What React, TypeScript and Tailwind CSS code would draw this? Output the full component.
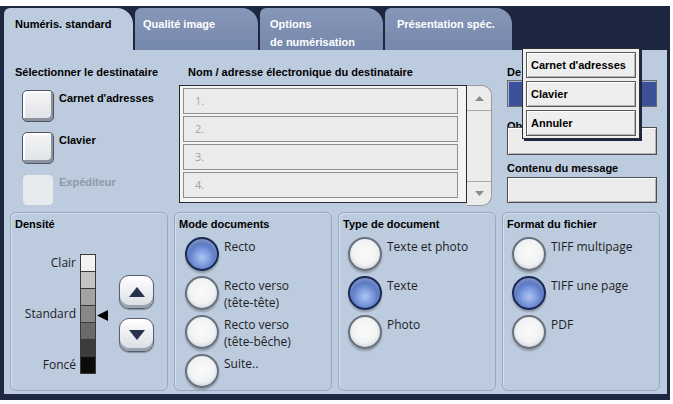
import type { ReactNode } from 'react';

function Radio({ on }: { on?: boolean }) {
  return (
    <div
      className={
        on
          ? 'w-[34px] h-[34px] shrink-0 rounded-full border-2 border-[#1c2b55] bg-[radial-gradient(circle_at_50%_62%,#aec4f4_0%,#7b98dc_35%,#4b69b5_68%,#2b4283_100%)] shadow-[inset_0_3px_3px_rgba(255,255,255,0.3),0_2px_2px_rgba(0,0,0,0.25)]'
          : 'w-[34px] h-[34px] shrink-0 rounded-full border-2 border-[#69717d] bg-[radial-gradient(circle_at_50%_45%,#fbfbfb_0%,#f1f2f3_55%,#cdd2d9_80%,#9aa1ac_100%)] shadow-[0_2px_2px_rgba(0,0,0,0.25)]'
      }
    />
  );
}

function Option({ on, children }: { on?: boolean; children: ReactNode }) {
  return (
    <div className="flex items-start gap-[5px] h-[34px]">
      <Radio on={on} />
      <div className="pt-[1px] leading-[17px] text-[12px] text-[#1e1e1e] font-['Open_Sans',sans-serif] whitespace-nowrap">
        {children}
      </div>
    </div>
  );
}

function Panel({ title, children }: { title: string; children: ReactNode }) {
  return (
    <div className="w-[158px] h-[179px] rounded-[6px] border border-[#97a9c2] shadow-[inset_1px_1px_0_#d3deeb] pt-[4px] px-[4px]">
      <div className="text-[11px] font-bold leading-[14px] text-black">{title}</div>
      {children}
    </div>
  );
}

function SelectButton({ label, disabled }: { label: string; disabled?: boolean }) {
  return (
    <div className="flex items-start gap-[5px]">
      <div
        className={
          disabled
            ? 'w-[32px] h-[32px] rounded-[5px] border border-[#c3cad4] bg-[#e7eaee]'
            : 'w-[32px] h-[32px] rounded-[5px] border border-[#4f5562] bg-[linear-gradient(#f4f5f6,#dfe2e6)] shadow-[inset_-2px_-3px_0_#8c929d,inset_2px_2px_0_#ffffff]'
        }
      />
      <div className={disabled ? 'pt-[1px] leading-[14px] text-[11px] font-bold text-[#8f99a7]' : 'pt-[1px] leading-[14px] text-[11px] font-bold text-black'}>
        {label}
      </div>
    </div>
  );
}

function StepButton({ up }: { up?: boolean }) {
  return (
    <div className="w-[35px] h-[34px] rounded-[10px] border border-[#59606c] bg-[linear-gradient(#ffffff,#d7dce3)] shadow-[inset_0_-3px_0_#9aa2ae,0_1px_1px_rgba(0,0,0,0.3)] flex items-center justify-center">
      <svg width="16" height="10" viewBox="0 0 16 10">
        <polygon points={up ? '8,0 16,10 0,10' : '0,0 16,0 8,10'} fill="#27324f" />
      </svg>
    </div>
  );
}

function Field({ blue, h }: { blue?: boolean; h: string }) {
  return (
    <div
      className={
        blue
          ? `w-[150px] ${h} border border-[#6b6b6b] bg-[#3c5199] shadow-[inset_1px_1px_0_#9fb0d8]`
          : `w-[150px] ${h} border border-[#4d4d4d] bg-[#ebebeb] shadow-[inset_1px_1px_0_#ffffff,inset_-1px_-1px_0_#b3b3b3]`
      }
    />
  );
}

function MenuItem({ label }: { label: string }) {
  return (
    <div className="h-[26px] border border-[#5a5a5a] bg-[#eeeeee] shadow-[inset_1px_1px_0_#ffffff,inset_-1px_-1px_0_#b5b5b5] pl-[4px] flex items-center text-[11px] font-bold text-black">
      {label}
    </div>
  );
}

const shades = ['#f2f2f2', '#c4c4c4', '#a2a2a2', '#888888', '#6b6b6b', '#3c3c3c', '#0b0b0b'];

export default function App() {
  return (
    <div className="relative w-[673px] h-[404px] bg-white pt-[6px] font-['Liberation_Sans',Arial,sans-serif]">
      <div className="w-[670px] h-[394px] bg-[#1d2741] flex flex-col pl-[4px] pr-[3px] pb-[6px]">
        {/* tabs */}
        <div className="h-[44px] flex items-end gap-[2px]">
          <div className="w-[129px] h-[42px] rounded-tl-[6px] rounded-tr-[16px] bg-[#bccbde] pl-[11px] pt-[7px] leading-[18px] text-[11px] font-bold text-black">
            Numéris. standard
          </div>
          <div className="w-[123px] h-[42px] rounded-tl-[6px] rounded-tr-[16px] bg-[linear-gradient(#8797b8,#7587ab)] pl-[8px] pt-[7px] leading-[18px] text-[11px] font-bold text-white">
            Qualité image
          </div>
          <div className="w-[123px] h-[42px] rounded-tl-[6px] rounded-tr-[16px] bg-[linear-gradient(#8797b8,#7587ab)] pl-[10px] pt-[7px] leading-[18px] text-[11px] font-bold text-white">
            Options
            <br />
            de numérisation
          </div>
          <div className="w-[127px] h-[42px] rounded-tl-[6px] rounded-tr-[16px] bg-[linear-gradient(#8797b8,#7587ab)] pl-[12px] pt-[7px] leading-[18px] text-[11px] font-bold text-white">
            Présentation spéc.
          </div>
        </div>

        {/* content */}
        <div className="flex-1 bg-[#bccbde] flex flex-col">
          {/* top section */}
          <div className="h-[158px] pt-[15px] flex">
            <div className="w-[175px] pl-[11px] flex flex-col">
              <div className="text-[11px] font-bold leading-[14px] text-black">Sélectionner le destinataire</div>
              <div className="mt-[11px] ml-[7px] flex flex-col gap-[10px]">
                <SelectButton label="Carnet d'adresses" />
                <SelectButton label="Clavier" />
                <SelectButton label="Expéditeur" disabled />
              </div>
            </div>

            <div className="w-[313px] flex flex-col">
              <div className="pl-[9px] text-[11px] font-bold leading-[14px] text-black">
                Nom / adresse électronique du destinataire
              </div>
              <div className="flex items-start mt-[6px]">
                <div className="w-[288px] h-[118px] border border-[#2a2a2a] bg-[#f3f3f3] pl-[3px] pt-[2px] pr-[8px] flex flex-col gap-[2px]">
                  {['1.', '2.', '3.', '4.'].map((n) => (
                    <div
                      key={n}
                      className="h-[26px] border border-[#8f8f8f] bg-[#ebebeb] pl-[11px] flex items-center text-[11px] text-[#a3a3a3] font-['Open_Sans',sans-serif]"
                    >
                      {n}
                    </div>
                  ))}
                </div>
                <div className="w-[25px] h-[121px] border border-l-0 border-[#9a9a9a] rounded-r-[10px] bg-[#ececec] flex flex-col">
                  <div className="h-[25px] border-b border-[#a8a8a8] flex items-center justify-center">
                    <svg width="9" height="5" viewBox="0 0 9 5">
                      <polygon points="4.5,0 9,5 0,5" fill="#8a8a8a" />
                    </svg>
                  </div>
                  <div className="flex-1" />
                  <div className="h-[24px] border-t border-[#a8a8a8] flex items-center justify-center">
                    <svg width="9" height="5" viewBox="0 0 9 5">
                      <polygon points="0,0 9,0 4.5,5" fill="#8a8a8a" />
                    </svg>
                  </div>
                </div>
              </div>
            </div>

            <div className="ml-[15px] w-[150px] flex flex-col">
              <div className="text-[11px] font-bold leading-[14px] text-black">De</div>
              <div className="mt-[1px]">
                <Field blue h="h-[27px]" />
              </div>
              <div className="mt-[6px] w-[15px] h-[14px] overflow-hidden">
                <span className="text-[11px] font-bold leading-[14px] text-black whitespace-nowrap">Objet</span>
              </div>
              <Field h="h-[28px]" />
              <div className="mt-[6px] text-[11px] font-bold leading-[14px] text-black">Contenu du message</div>
              <div className="mt-[2px]">
                <Field h="h-[26px]" />
              </div>
            </div>
          </div>

          {/* bottom panels */}
          <div className="pt-[4px] pl-[6px] flex gap-[6px]">
            <Panel title="Densité">
              <div className="mt-[23px] flex items-start">
                <div className="w-[61px] flex flex-col items-end text-[12px] text-[#1e1e1e] font-['Open_Sans',sans-serif]">
                  {['Clair', '', '', 'Standard', '', '', 'Foncé'].map((l, i) => (
                    <div key={i} className="h-[17px] leading-[17px]">
                      {l}
                    </div>
                  ))}
                </div>
                <div className="ml-[4px] w-[16px] flex flex-col border border-[#3a3a3a] bg-[#3a3a3a] gap-px">
                  {shades.map((c) => (
                    <div key={c} className="h-[16px] bg-[var(--c)]" style={{ ['--c' as string]: c }} />
                  ))}
                </div>
                <div className="ml-[1px] w-[12px] pt-[56px]">
                  <svg width="11" height="11" viewBox="0 0 11 11">
                    <polygon points="0,5.5 11,0 11,11" fill="#000" />
                  </svg>
                </div>
                <div className="ml-[10px] pt-[21px] flex flex-col gap-[9px]">
                  <StepButton up />
                  <StepButton />
                </div>
              </div>
            </Panel>

            <Panel title="Mode documents">
              <div className="mt-[6px] ml-[6px] flex flex-col gap-[5px]">
                <Option on>Recto</Option>
                <Option>
                  Recto verso
                  <br />
                  (tête-tête)
                </Option>
                <Option>
                  Recto verso
                  <br />
                  (tête-bêche)
                </Option>
                <Option>Suite..</Option>
              </div>
            </Panel>

            <Panel title="Type de document">
              <div className="mt-[6px] ml-[5px] flex flex-col gap-[5px]">
                <Option>Texte et photo</Option>
                <Option on>Texte</Option>
                <Option>Photo</Option>
              </div>
            </Panel>

            <Panel title="Format du fichier">
              <div className="mt-[6px] ml-[5px] flex flex-col gap-[5px]">
                <Option>TIFF multipage</Option>
                <Option on>TIFF une page</Option>
                <Option>PDF</Option>
              </div>
            </Panel>
          </div>
        </div>
      </div>

      {/* popup menu */}
      <div className="absolute left-[522px] top-[48px] w-[118px] h-[91px] border border-[#2e2e2e] bg-[#f0f0f0] shadow-[2px_2px_0_#1d2741] pt-[3px] px-[3px] flex flex-col gap-[3px]">
        <MenuItem label="Carnet d'adresses" />
        <MenuItem label="Clavier" />
        <MenuItem label="Annuler" />
      </div>
    </div>
  );
}
